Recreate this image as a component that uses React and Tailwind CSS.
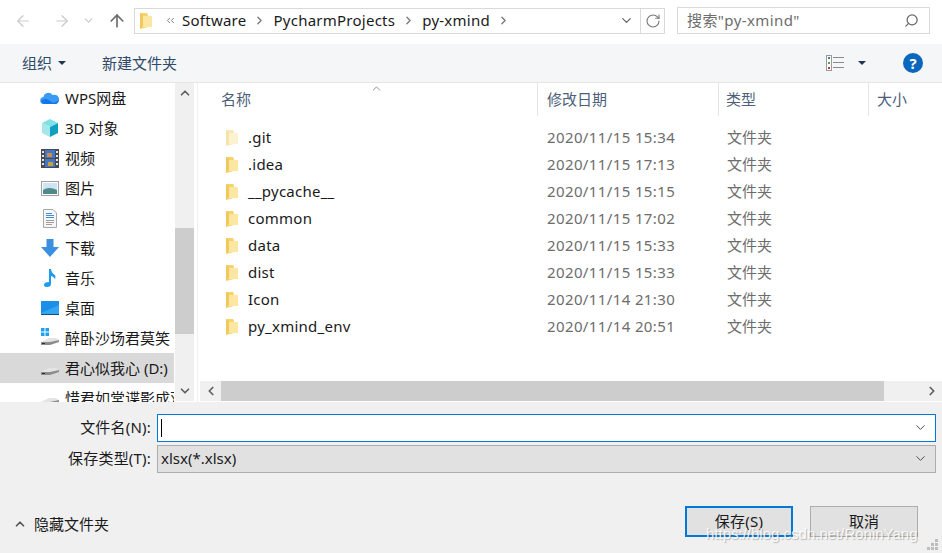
// App.jsx
// Windows save dialog
import React from 'react';
import { ArrowLeft, ArrowRight, ArrowUp, ChevronDown, ChevronUp, ChevronLeft, ChevronRight, RotateCw, Search } from 'lucide-react';

const FONT = '"Noto Sans", "Noto Sans CJK SC", sans-serif';

const Folder = ({ faded }) => (
    <svg width="14" height="18" viewBox="0 0 14 18" className={faded ? 'opacity-50' : ''}>
        <path d="M1 1 H8 L9 3 V15 L1 17 Z" fill="#f5d36f" />
        <path d="M4 4 H13 V15 H1 L4 13 Z" fill="#fbe6a2" />
        <path d="M1 1 L4 3 V14 L1 17 Z" fill="#f2c75c" />
    </svg>
);

const Drive = ({ win }) => (
    <svg width="20" height="20" viewBox="0 0 20 20">
        {win && (
            <g fill="#1ea1f1">
                <rect x="1" y="0" width="3.5" height="3.5" />
                <rect x="5.5" y="0" width="3.5" height="3.5" />
                <rect x="1" y="4.5" width="3.5" height="3.5" />
                <rect x="5.5" y="4.5" width="3.5" height="3.500" />
            </g>
        )}
        <path d="M1 14 L9 10 H16 L19 12 L10 15 H1 Z" fill="#e4e4e4" />
        <path d="M1 14 H10 L19 12 V14 L10 17 H1 Z" fill="#8c8c8c" />
        <rect x="2" y="15" width="3" height="1" fill="#2f2f2f" />
    </svg>
);

const navIcons = {
    cloud: (
        <svg width="20" height="16" viewBox="0 0 20 16">
            <path d="M4 14 a3.5 3.5 0 0 1 -.5 -7 a5 5 0 0 1 9 -2 a4.5 4.5 0 0 1 3.500 9 Z" fill="#3a9bf4" />
            <path d="M1 11 Q6 7 10 11 T19 10 Q18 14 15 14 H4 Q2 14 1 11 Z" fill="#1476e8" />
        </svg>
    ),
    cube: (
        <svg width="20" height="20" viewBox="0 0 20 20">
            <path d="M10 1 L18 5 L10 9 L2 5 Z" fill="#7fe0e6" />
            <path d="M2 5 L10 9 V19 L2 15 Z" fill="#a5e6ea" />
            <path d="M18 5 L10 9 V19 L18 15 Z" fill="#0f9fc0" />
        </svg>
    ),
    video: (
        <svg width="18" height="19" viewBox="0 0 18 19">
            <rect width="18" height="19" fill="#4a4a4a" />
            <rect x="4" y="1" width="10" height="8" fill="#3f78c8" />
            <rect x="4" y="10" width="10" height="8" fill="#3f78c8" />
            <rect x="6" y="4" width="5" height="4" fill="#d98a3a" />
            <rect x="7" y="13" width="5" height="4" fill="#c9a03a" />
            <g fill="#e6e6e6">
                <rect x="1" y="2" width="2" height="2" /><rect x="1" y="6" width="2" height="2" /><rect x="1" y="10" width="2" height="2" /><rect x="1" y="14" width="2" height="2" />
                <rect x="15" y="2" width="2" height="2" /><rect x="15" y="6" width="2" height="2" /><rect x="15" y="10" width="2" height="2" /><rect x="15" y="14" width="2" height="2" />
            </g>
        </svg>
    ),
    image: (
        <svg width="18" height="15" viewBox="0 0 18 15">
            <rect x=".5" y=".5" width="17" height="14" fill="#fff" stroke="#a0a0a0" />
            <rect x="2" y="2" width="14" height="11" fill="#cfe3f2" />
            <path d="M2 9 Q8 5 16 9 V13 H2 Z" fill="#4f8a8a" />
        </svg>
    ),
    doc: (
        <svg width="16" height="19" viewBox="0 0 16 19">
            <path d="M1.500 .5 H11 L14.500 4 V18.500 H1.500 Z" fill="#f6f6f6" stroke="#a8a8a8" />
            <g fill="#3a8fd8">
                <rect x="4" y="4" width="6" height="1" /><rect x="4" y="6" width="8" height="1" /><rect x="4" y="8" width="8" height="1" />
            </g>
            <g fill="#a0a0a0">
                <rect x="4" y="11" width="8" height="1" /><rect x="4" y="13" width="8" height="1" /><rect x="4" y="15" width="6" height="1" />
            </g>
        </svg>
    ),
    download: (
        <svg width="18" height="18" viewBox="0 0 18 18">
            <path d="M5.500 0 H12.500 V8 H18 L9 18 L0 8 H5.500 Z" fill="#3b8fe0" />
        </svg>
    ),
    music: (
        <svg width="14" height="20" viewBox="0 0 14 20">
            <path d="M6 1 H8 Q8.500 5 12 7 Q13 9 12 11 Q10 8 8 8 V16 Q8 19 4 19 Q1 19 1 17 Q1 14 6 14 Z" fill="#1f9bf0" />
        </svg>
    ),
    desktop: (
        <svg width="18" height="14" viewBox="0 0 18 14">
            <rect width="18" height="13" fill="#1a8fe8" />
            <path d="M0 12 L18 4 V13 H0 Z" fill="#35a5f2" />
            <rect x="0" y="13" width="18" height="1" fill="#0b4f8a" />
        </svg>
    ),
    winDrive: <Drive win />,
    drive: <Drive />,
};

const navItems = [
    { icon: 'cloud', label: 'WPS网盘' },
    { icon: 'cube', label: '3D 对象' },
    { icon: 'video', label: '视频' },
    { icon: 'image', label: '图片' },
    { icon: 'doc', label: '文档' },
    { icon: 'download', label: '下载' },
    { icon: 'music', label: '音乐' },
    { icon: 'desktop', label: '桌面' },
    { icon: 'winDrive', label: '醉卧沙场君莫笑' },
    { icon: 'drive', label: '君心似我心 (D:)', active: true },
    { icon: 'drive', label: '惜君如常谍影成双' },
];

const files = [
    { name: '.git', date: '2020/11/15 15:34', faded: true },
    { name: '.idea', date: '2020/11/15 17:13' },
    { name: '__pycache__', date: '2020/11/15 15:15' },
    { name: 'common', date: '2020/11/15 17:02' },
    { name: 'data', date: '2020/11/15 15:33' },
    { name: 'dist', date: '2020/11/15 15:33' },
    { name: 'Icon', date: '2020/11/14 21:30' },
    { name: 'py_xmind_env', date: '2020/11/14 20:51' },
];

const Crumb = ({ children }) => (
    <>
        <span className="text-[15px] tracking-[0.25px] text-[#1a1a1a]">{children}</span>
        <ChevronRight size={13} strokeWidth={2.5} className="text-[#7a7a7a] mx-[7px]" />
    </>
);

const App = () => {
    return (
        <div className="relative w-[942px] h-[553px] overflow-hidden bg-[#f0f0f0] flex flex-col" style={{ fontFamily: FONT }}>
            {/* Address bar */}
            <div className="h-[44px] pb-[3px] bg-white flex items-center">
                <div className="w-[134px] h-full flex items-center text-[#c9c9c9]">
                    <ArrowLeft size={18} strokeWidth={1.6} className="ml-[14px]" />
                    <ArrowRight size={18} strokeWidth={1.6} className="ml-[21px]" />
                    <ChevronDown size={13} strokeWidth={2} className="ml-[11px]" />
                    <ArrowUp size={20} strokeWidth={2} className="ml-[12px] text-[#6b6b6b]" />
                </div>
                <div className="w-[531px] h-[26px] border border-[#d9d9d9] flex items-center">
                    <div className="ml-[4px]"><Folder /></div>
                    <ChevronLeft size={9} strokeWidth={2.5} className="ml-[11px] text-[#7a7a7a]" />
                    <ChevronLeft size={9} strokeWidth={2.5} className="-ml-[5px] mr-[5px] text-[#7a7a7a]" />
                    <Crumb>Software</Crumb>
                    <Crumb>PycharmProjects</Crumb>
                    <Crumb>py-xmind</Crumb>
                    <div className="ml-auto flex items-center h-full">
                        <ChevronDown size={15} strokeWidth={2} className="text-[#666] mr-[6px]" />
                        <div className="w-[24px] h-full border-l border-[#d9d9d9] flex items-center justify-center">
                            <RotateCw size={16} strokeWidth={1.6} className="text-[#777]" />
                        </div>
                    </div>
                </div>
                <div className="ml-[12px] w-[253px] h-[27px] border border-[#d9d9d9] flex items-center pl-[9px] pr-[10px] text-[15px] tracking-[0.4px] text-[#6d6d6d]">
                    <span>搜索"py-xmind"</span>
                    <Search size={15} strokeWidth={2} className="ml-auto text-[#666] -scale-x-100" />
                </div>
            </div>

            {/* Toolbar */}
            <div className="h-[39px] bg-[#f5f6f7] border-b border-[#e5e5e5] flex items-center text-[15px] text-[#2f4a68]">
                <span className="ml-[22px]">组织</span>
                <span className="ml-[6px] w-0 h-0 border-x-[4px] border-x-transparent border-t-[4px] border-t-[#1f3655]"></span>
                <span className="ml-[36px]">新建文件夹</span>
                <div className="ml-auto flex items-center">
                    <svg width="18" height="16" viewBox="0 0 18 16">
                        <rect x=".5" y=".5" width="5" height="15" fill="#fff" stroke="#9a9a9a" />
                        <rect x="2" y="2" width="2" height="2" fill="#3a7a9a" />
                        <rect x="2" y="7" width="2" height="2" fill="#6a9a3a" />
                        <rect x="2" y="12" width="2" height="2" fill="#c0392b" />
                        <g fill="#8a8a8a">
                            <rect x="7" y="2" width="11" height="1" /><rect x="7" y="7" width="11" height="1" /><rect x="7" y="12" width="11" height="1" />
                        </g>
                    </svg>
                    <span className="ml-[14px] w-0 h-0 border-x-[4px] border-x-transparent border-t-[4px] border-t-[#1f3655]"></span>
                    <span className="ml-[37px] mr-[19px] w-[20px] h-[20px] rounded-full bg-[#0b66bd] text-white font-bold text-[15px] leading-[20px] text-center">?</span>
                </div>
            </div>

            {/* Body */}
            <div className="h-[319px] bg-white flex">
                {/* Sidebar */}
                <div className="w-[175px] h-full overflow-hidden">
                    {navItems.map((item) => (
                        <div key={item.label} className={`w-[174px] h-[30px] flex items-center whitespace-nowrap overflow-hidden ${item.active ? 'bg-[#d9d9d9]' : ''}`}>
                            <div className="ml-[40px] w-[20px] flex items-center justify-center">{navIcons[item.icon]}</div>
                            <span className="ml-[5px] text-[15px] text-[#1a1a1a]">{item.label}</span>
                        </div>
                    ))}
                </div>

                {/* Sidebar scrollbar */}
                <div className="w-[19px] h-[318px] bg-[#f0f0f0] flex flex-col items-center">
                    <div className="h-[20px] flex items-center"><ChevronUp size={14} strokeWidth={3} className="text-[#606060]" /></div>
                    <div className="mt-[125px] w-full h-[106px] bg-[#cdcdcd]"></div>
                    <div className="mt-auto h-[20px] flex items-center"><ChevronDown size={14} strokeWidth={3} className="text-[#606060]" /></div>
                </div>

                {/* File list */}
                <div className="ml-[3px] flex-1 min-w-0 border-l border-[#f0f0f0] flex flex-col relative">
                    <ChevronUp size={13} strokeWidth={1.5} className="absolute left-[172px] -top-[1px] text-[#777]" />
                    <div className="h-[33px] flex text-[15px] text-[#4c607a]">
                        <div className="w-[340px] pl-[23px] leading-[32px] border-r border-[#e5e5e5]">名称</div>
                        <div className="w-[181px] pl-[9px] leading-[32px] border-r border-[#e5e5e5]">修改日期</div>
                        <div className="w-[150px] pl-[7px] leading-[32px] border-r border-[#e5e5e5]">类型</div>
                        <div className="pl-[8px] leading-[32px]">大小</div>
                    </div>
                    <div className="pt-[8px] flex-1">
                        {files.map((file) => (
                            <div key={file.name} className="h-[27px] flex items-center text-[15px]">
                                <div className="w-[50px] pl-[27px] flex items-center"><Folder faded={file.faded} /></div>
                                <span className="w-[299px] tracking-[0.25px] text-[#1a1a1a]">{file.name}</span>
                                <span className="w-[180px] tracking-[0.38px] text-[#6d6d6d]">{file.date}</span>
                                <span className="text-[#6d6d6d]">文件夹</span>
                            </div>
                        ))}
                    </div>
                    <div className="h-[20px] mb-[1px] ml-[2px] bg-[#f0f0f0] flex items-center">
                        <div className="w-[21px] flex justify-center"><ChevronLeft size={14} strokeWidth={3} className="text-[#606060]" /></div>
                        <div className="w-[663px] h-full bg-[#cdcdcd]"></div>
                        <div className="ml-auto w-[20px] flex justify-center"><ChevronRight size={14} strokeWidth={3} className="text-[#606060]" /></div>
                    </div>
                </div>
            </div>

            {/* Save form */}
            <div className="flex-1 flex flex-col text-[15px] text-[#1a1a1a]">
                <div className="mt-[11px] h-[29px] flex items-center">
                    <span className="w-[151px] text-right tracking-[0.2px]">文件名(N):</span>
                    <div className="ml-[6px] w-[779px] h-[28px] bg-white border border-[#0078d7] flex items-center">
                        <span className="ml-[3px] w-px h-[18px] bg-black"></span>
                        <ChevronDown size={15} strokeWidth={1.5} className="ml-auto mr-[7px] text-[#444]" />
                    </div>
                </div>
                <div className="mt-[2px] h-[29px] flex items-center">
                    <span className="w-[151px] text-right tracking-[0.2px]">保存类型(T):</span>
                    <div className="ml-[6px] w-[779px] h-[28px] bg-[#e1e1e1] border border-[#adadad] flex items-center pl-[3px]">
                        <span>xlsx(*.xlsx)</span>
                        <ChevronDown size={15} strokeWidth={1.5} className="ml-auto mr-[7px] text-[#444]" />
                    </div>
                </div>
                <div className="mt-[33px] flex items-center">
                    <div className="flex items-center self-start mt-[7px]">
                        <ChevronUp size={14} strokeWidth={3} className="ml-[13px] text-[#555]" />
                        <span className="ml-[7px]">隐藏文件夹</span>
                    </div>
                    <div className="ml-auto flex mr-[24px] gap-[17px]">
                        <div className="w-[108px] h-[31px] bg-[#e1e1e1] border-2 border-[#0078d7] flex items-center justify-center tracking-[0.3px]">保存(S)</div>
                        <div className="w-[108px] h-[31px] bg-[#e1e1e1] border border-[#adadad] flex items-center justify-center">取消</div>
                    </div>
                </div>
            </div>

            {/* Resize grip */}
            <svg width="12" height="12" viewBox="0 0 12 12" className="absolute right-[3px] bottom-[2px]" fill="#bdbdbd">
                <rect x="8" y="0" width="3" height="3" />
                <rect x="4" y="4" width="3" height="3" /><rect x="8" y="4" width="3" height="3" />
                <rect x="0" y="8" width="3" height="3" /><rect x="4" y="8" width="3" height="3" /><rect x="8" y="8" width="3" height="3" />
            </svg>

            {/* Watermark */}
            <span className="absolute left-[706px] bottom-[8px] text-[15px] font-['Liberation_Sans',sans-serif] text-white/85 [text-shadow:1px_1px_1px_rgba(0,0,0,0.25)] whitespace-nowrap">https://blog.csdn.net/RoninYang</span>
        </div>
    );
};

export default App;
